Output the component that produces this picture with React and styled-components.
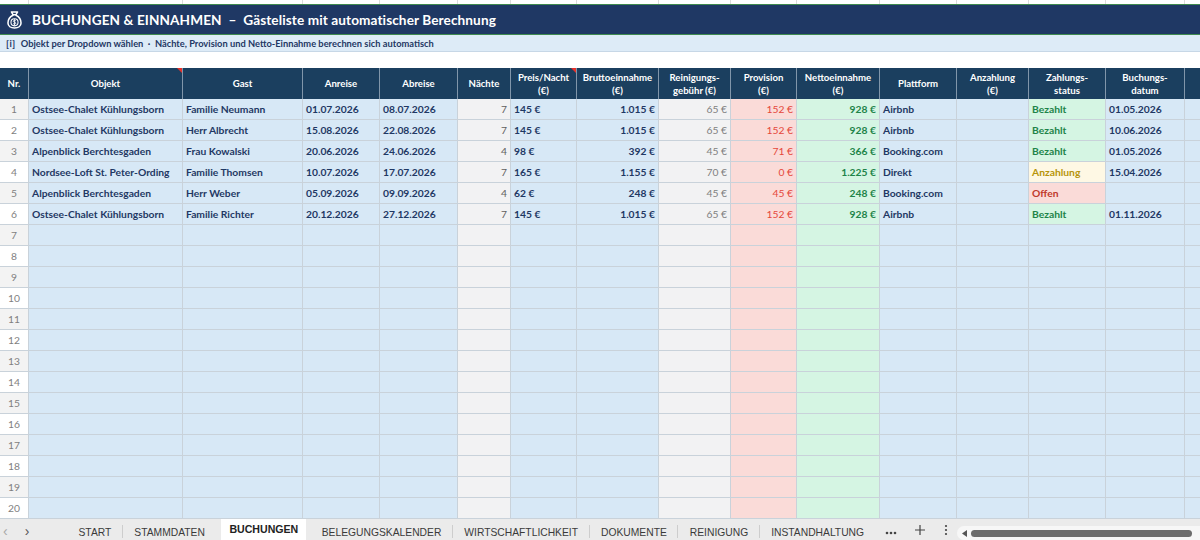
import React from "react";
import styled, { createGlobalStyle, css } from "styled-components";

const GlobalStyle = createGlobalStyle`
  html, body {
    margin: 0;
    padding: 0;
    background: #ffffff;
    overflow: hidden;
  }
  * {
    box-sizing: border-box;
  }
`;

const COLS =
  "29px 154px 120px 77px 78px 53px 66px 82px 72px 66px 83px 77px 72px 77px 79px 80px";

const Page = styled.div`
  width: 1200px;
  height: 540px;
  overflow: hidden;
  display: flex;
  flex-direction: column;
  font-family: Lato, "Liberation Sans", sans-serif;
  background: #ffffff;
`;

const GridRow = styled.div`
  display: grid;
  grid-template-columns: ${COLS};
  height: ${(p) => p.$h}px;
  flex-shrink: 0;
`;

const StripCell = styled.div`
  border-right: 1px solid #dcdcdc;
`;

const TitleBar = styled.div`
  height: 31px;
  flex-shrink: 0;
  background: #1f3864;
  border-top: 1px solid #3f8a4f;
  border-bottom: 1px solid #3f8a4f;
  display: flex;
  align-items: center;
  gap: 8px;
  padding-left: 5px;
  color: #ffffff;
`;

const Title = styled.h1`
  margin: 0;
  font-size: 13.6px;
  font-weight: 700;
  letter-spacing: 0.1px;
  white-space: pre;
`;

const InfoBar = styled.div`
  height: 17px;
  flex-shrink: 0;
  background: #ddebf7;
  border-bottom: 1px solid #c7d7e6;
  display: flex;
  align-items: center;
  gap: 5px;
  padding-left: 6px;
  font-size: 9.3px;
  font-weight: 700;
  color: #1f3864;
  white-space: pre;
`;

const InfoMark = styled.span`
  letter-spacing: 0.5px;
`;

const Spacer = styled.div`
  height: 16px;
  flex-shrink: 0;
  background: #ffffff;
`;

const HeadCell = styled.div`
  position: relative;
  background: #1b3f5f;
  border-right: 1px solid #8196aa;
  color: #ffffff;
  font-size: 9.6px;
  font-weight: 700;
  line-height: 13px;
  text-align: center;
  display: flex;
  flex-direction: column;
  align-items: center;
  justify-content: center;
  white-space: nowrap;
`;

const Marker = styled.span`
  position: absolute;
  top: 0;
  right: 0;
  width: 0;
  height: 0;
  border-top: 5px solid #e8312a;
  border-left: 5px solid transparent;
`;

const tones = {
  nr: css`
    background: ${(p) => (p.$odd ? "#f3f3f3" : "#ffffff")};
    color: #7f7f7f;
    font-weight: 400;
  `,
  input: css`
    background: #d7e8f6;
    color: #1f3864;
    font-weight: 700;
  `,
  calc: css`
    background: #f2f2f3;
    color: #5f5f5f;
    font-weight: 400;
  `,
  fee: css`
    background: #f2f2f3;
    color: #808080;
    font-weight: 400;
  `,
  prov: css`
    background: #fadbd8;
    color: #e5483a;
    font-weight: 400;
  `,
  netto: css`
    background: #d5f5e3;
    color: #1e8449;
    font-weight: 700;
  `,
  Bezahlt: css`
    background: #d5f5e3;
    color: #1e8449;
    font-weight: 700;
  `,
  Anzahlung: css`
    background: #fef8e4;
    color: #b7950b;
    font-weight: 700;
  `,
  Offen: css`
    background: #fadbd8;
    color: #c0392b;
    font-weight: 700;
  `,
};

const Cell = styled.div`
  ${(p) => tones[p.$tone]}
  border-right: 1px solid #c9d2da;
  border-bottom: 1px solid #c9d2da;
  font-size: 10.3px;
  line-height: 20px;
  padding: 0 3px;
  text-align: ${(p) => p.$align || "left"};
  white-space: nowrap;
  overflow: hidden;
`;

const TabBar = styled.div`
  flex: 1;
  background: #ebebeb;
  display: flex;
  align-items: stretch;
  font-family: "Liberation Sans", Arial, sans-serif;
  font-size: 10.3px;
  color: #3a3a3a;
  overflow: hidden;
`;

const NavArrows = styled.div`
  width: 67px;
  display: flex;
  align-items: flex-end;
  gap: 17px;
  padding: 0 0 0 3px;
  font-size: 14px;
  line-height: 18px;
`;

const Arrow = styled.span`
  color: ${(p) => (p.$disabled ? "#a8a8a8" : "#555555")};
`;

const Tab = styled.div`
  position: relative;
  display: flex;
  align-items: flex-end;
  padding: 0 ${(p) => (p.$tail ? "13px" : "11.5px")} 2px 11.5px;
  white-space: nowrap;
  ${(p) =>
    p.$active
      ? css`
          background: #ffffff;
          font-weight: 700;
          font-size: 10.6px;
          align-items: center;
          padding: 0 8px 2px;
          margin: 0 4px 0 5px;
          color: #222222;
        `
      : css`
          &::after {
            content: "";
            position: absolute;
            right: 0;
            bottom: 2px;
            width: 1px;
            height: 13px;
            background: #cdcdcd;
          }
        `}
  ${(p) =>
    p.$noSep &&
    css`
      &::after {
        display: none;
      }
    `}
`;

const ToolIcon = styled.div`
  display: flex;
  align-items: flex-end;
  padding: 0 ${(p) => p.$pad}px 4px;
  color: #444444;
`;

const ScrollTrack = styled.div`
  flex: 1;
  margin: 7px 0 0 0;
  background: #f7f7f7;
  border-radius: 8px 0 0 8px;
  display: flex;
  align-items: center;
  gap: 4px;
  padding-left: 5px;
`;

const ScrollThumb = styled.div`
  flex: 1;
  height: 7px;
  border-radius: 4px;
  background: #6d6d6d;
  margin-right: 8px;
`;

const columns = [
  { key: "nr", head: ["Nr."], tone: "nr", align: "center" },
  { key: "objekt", head: ["Objekt"], marker: true },
  { key: "gast", head: ["Gast"] },
  { key: "anreise", head: ["Anreise"] },
  { key: "abreise", head: ["Abreise"] },
  { key: "naechte", head: ["Nächte"], tone: "calc", align: "right" },
  { key: "preis", head: ["Preis/Nacht", "(€)"], marker: true },
  { key: "brutto", head: ["Bruttoeinnahme", "(€)"], align: "right" },
  { key: "reinigung", head: ["Reinigungs-", "gebühr (€)"], tone: "fee", align: "right" },
  { key: "provision", head: ["Provision", "(€)"], tone: "prov", align: "right" },
  { key: "netto", head: ["Nettoeinnahme", "(€)"], tone: "netto", align: "right" },
  { key: "plattform", head: ["Plattform"] },
  { key: "anzahlung", head: ["Anzahlung", "(€)"] },
  { key: "status", head: ["Zahlungs-", "status"] },
  { key: "buchung", head: ["Buchungs-", "datum"] },
  { key: "extra", head: [""] },
];

const bookings = [
  { objekt: "Ostsee-Chalet Kühlungsborn", gast: "Familie Neumann", anreise: "01.07.2026", abreise: "08.07.2026", naechte: "7", preis: "145 €", brutto: "1.015 €", reinigung: "65 €", provision: "152 €", netto: "928 €", plattform: "Airbnb", status: "Bezahlt", buchung: "01.05.2026" },
  { objekt: "Ostsee-Chalet Kühlungsborn", gast: "Herr Albrecht", anreise: "15.08.2026", abreise: "22.08.2026", naechte: "7", preis: "145 €", brutto: "1.015 €", reinigung: "65 €", provision: "152 €", netto: "928 €", plattform: "Airbnb", status: "Bezahlt", buchung: "10.06.2026" },
  { objekt: "Alpenblick Berchtesgaden", gast: "Frau Kowalski", anreise: "20.06.2026", abreise: "24.06.2026", naechte: "4", preis: "98 €", brutto: "392 €", reinigung: "45 €", provision: "71 €", netto: "366 €", plattform: "Booking.com", status: "Bezahlt", buchung: "01.05.2026" },
  { objekt: "Nordsee-Loft St. Peter-Ording", gast: "Familie Thomsen", anreise: "10.07.2026", abreise: "17.07.2026", naechte: "7", preis: "165 €", brutto: "1.155 €", reinigung: "70 €", provision: "0 €", netto: "1.225 €", plattform: "Direkt", status: "Anzahlung", buchung: "15.04.2026" },
  { objekt: "Alpenblick Berchtesgaden", gast: "Herr Weber", anreise: "05.09.2026", abreise: "09.09.2026", naechte: "4", preis: "62 €", brutto: "248 €", reinigung: "45 €", provision: "45 €", netto: "248 €", plattform: "Booking.com", status: "Offen", buchung: "" },
  { objekt: "Ostsee-Chalet Kühlungsborn", gast: "Familie Richter", anreise: "20.12.2026", abreise: "27.12.2026", naechte: "7", preis: "145 €", brutto: "1.015 €", reinigung: "65 €", provision: "152 €", netto: "928 €", plattform: "Airbnb", status: "Bezahlt", buchung: "01.11.2026" },
];

const rows = Array.from({ length: 20 }, (_, i) => ({ nr: String(i + 1), ...(bookings[i] || {}) }));

const tabs = [
  "START",
  "STAMMDATEN",
  "BUCHUNGEN",
  "BELEGUNGSKALENDER",
  "WIRTSCHAFTLICHKEIT",
  "DOKUMENTE",
  "REINIGUNG",
  "INSTANDHALTUNG",
];

const MoneyBag = () => (
  <svg width="19" height="20" viewBox="0 0 24 26" fill="none" stroke="#ffffff" strokeWidth="2" strokeLinecap="round" strokeLinejoin="round">
    <path d="M8 2.5h8l-2.2 3.8h-3.6z" />
    <path d="M10 6.8C5.5 9 3.5 13.5 3.5 17c0 4 3.6 6.5 8.5 6.5s8.5-2.5 8.5-6.5c0-3.5-2-8-6.5-10.2" />
    <circle cx="12" cy="16" r="4.6" strokeWidth="1.4" />
    <path d="M13.6 14.1c-.4-.5-1-.7-1.6-.7-.9 0-1.6.5-1.6 1.2 0 1.6 3.3.9 3.3 2.6 0 .7-.7 1.2-1.7 1.2-.7 0-1.3-.3-1.7-.8M12 12.4v7.2" strokeWidth="1.1" />
  </svg>
);

const cellTone = (col, row) => {
  if (col.key === "nr") return "nr";
  if (col.key === "status" && row.status) return row.status;
  return col.tone || "input";
};

const App = () => {
  return (
    <>
      <GlobalStyle />
      <Page>
        <GridRow $h={4}>
          {columns.map((c) => (
            <StripCell key={c.key} />
          ))}
        </GridRow>
        <TitleBar>
          <MoneyBag />
          <Title>{"BUCHUNGEN & EINNAHMEN  –  Gästeliste mit automatischer Berechnung"}</Title>
        </TitleBar>
        <InfoBar>
          <InfoMark>[i]</InfoMark>
          <span>{"Objekt per Dropdown wählen  ·  Nächte, Provision und Netto-Einnahme berechnen sich automatisch"}</span>
        </InfoBar>
        <Spacer />
        <GridRow $h={31}>
          {columns.map((c) => (
            <HeadCell key={c.key}>
              {c.head.map((line, i) => (
                <span key={i}>{line}</span>
              ))}
              {c.marker && <Marker />}
            </HeadCell>
          ))}
        </GridRow>
        {rows.map((row, i) => (
          <GridRow key={row.nr} $h={21}>
            {columns.map((c) => (
              <Cell key={c.key} $tone={cellTone(c, row)} $align={c.align} $odd={i % 2 === 0}>
                {row[c.key] || ""}
              </Cell>
            ))}
          </GridRow>
        ))}
        <TabBar>
          <NavArrows>
            <Arrow $disabled>‹</Arrow>
            <Arrow>›</Arrow>
          </NavArrows>
          {tabs.map((t, i) => (
            <Tab
              key={t}
              $active={t === "BUCHUNGEN"}
              $tail={i === tabs.length - 1}
              $noSep={i === tabs.length - 1 || tabs[i + 1] === "BUCHUNGEN"}
            >
              {t}
            </Tab>
          ))}
          <ToolIcon $pad={8}>
            <svg width="12" height="6" viewBox="0 0 12 6">
              <circle cx="2" cy="3" r="1.3" fill="#444" />
              <circle cx="6" cy="3" r="1.3" fill="#444" />
              <circle cx="10" cy="3" r="1.3" fill="#444" />
            </svg>
          </ToolIcon>
          <ToolIcon $pad={9}>
            <svg width="12" height="12" viewBox="0 0 12 12" stroke="#444" strokeWidth="1.2">
              <path d="M6 1v10M1 6h10" />
            </svg>
          </ToolIcon>
          <ToolIcon $pad={9}>
            <svg width="4" height="12" viewBox="0 0 4 12">
              <circle cx="2" cy="2" r="1.1" fill="#444" />
              <circle cx="2" cy="6" r="1.1" fill="#444" />
              <circle cx="2" cy="10" r="1.1" fill="#444" />
            </svg>
          </ToolIcon>
          <ScrollTrack>
            <svg width="5" height="7" viewBox="0 0 5 7">
              <path d="M5 0L0 3.5L5 7z" fill="#555" />
            </svg>
            <ScrollThumb />
          </ScrollTrack>
        </TabBar>
      </Page>
    </>
  );
};

export default App;
